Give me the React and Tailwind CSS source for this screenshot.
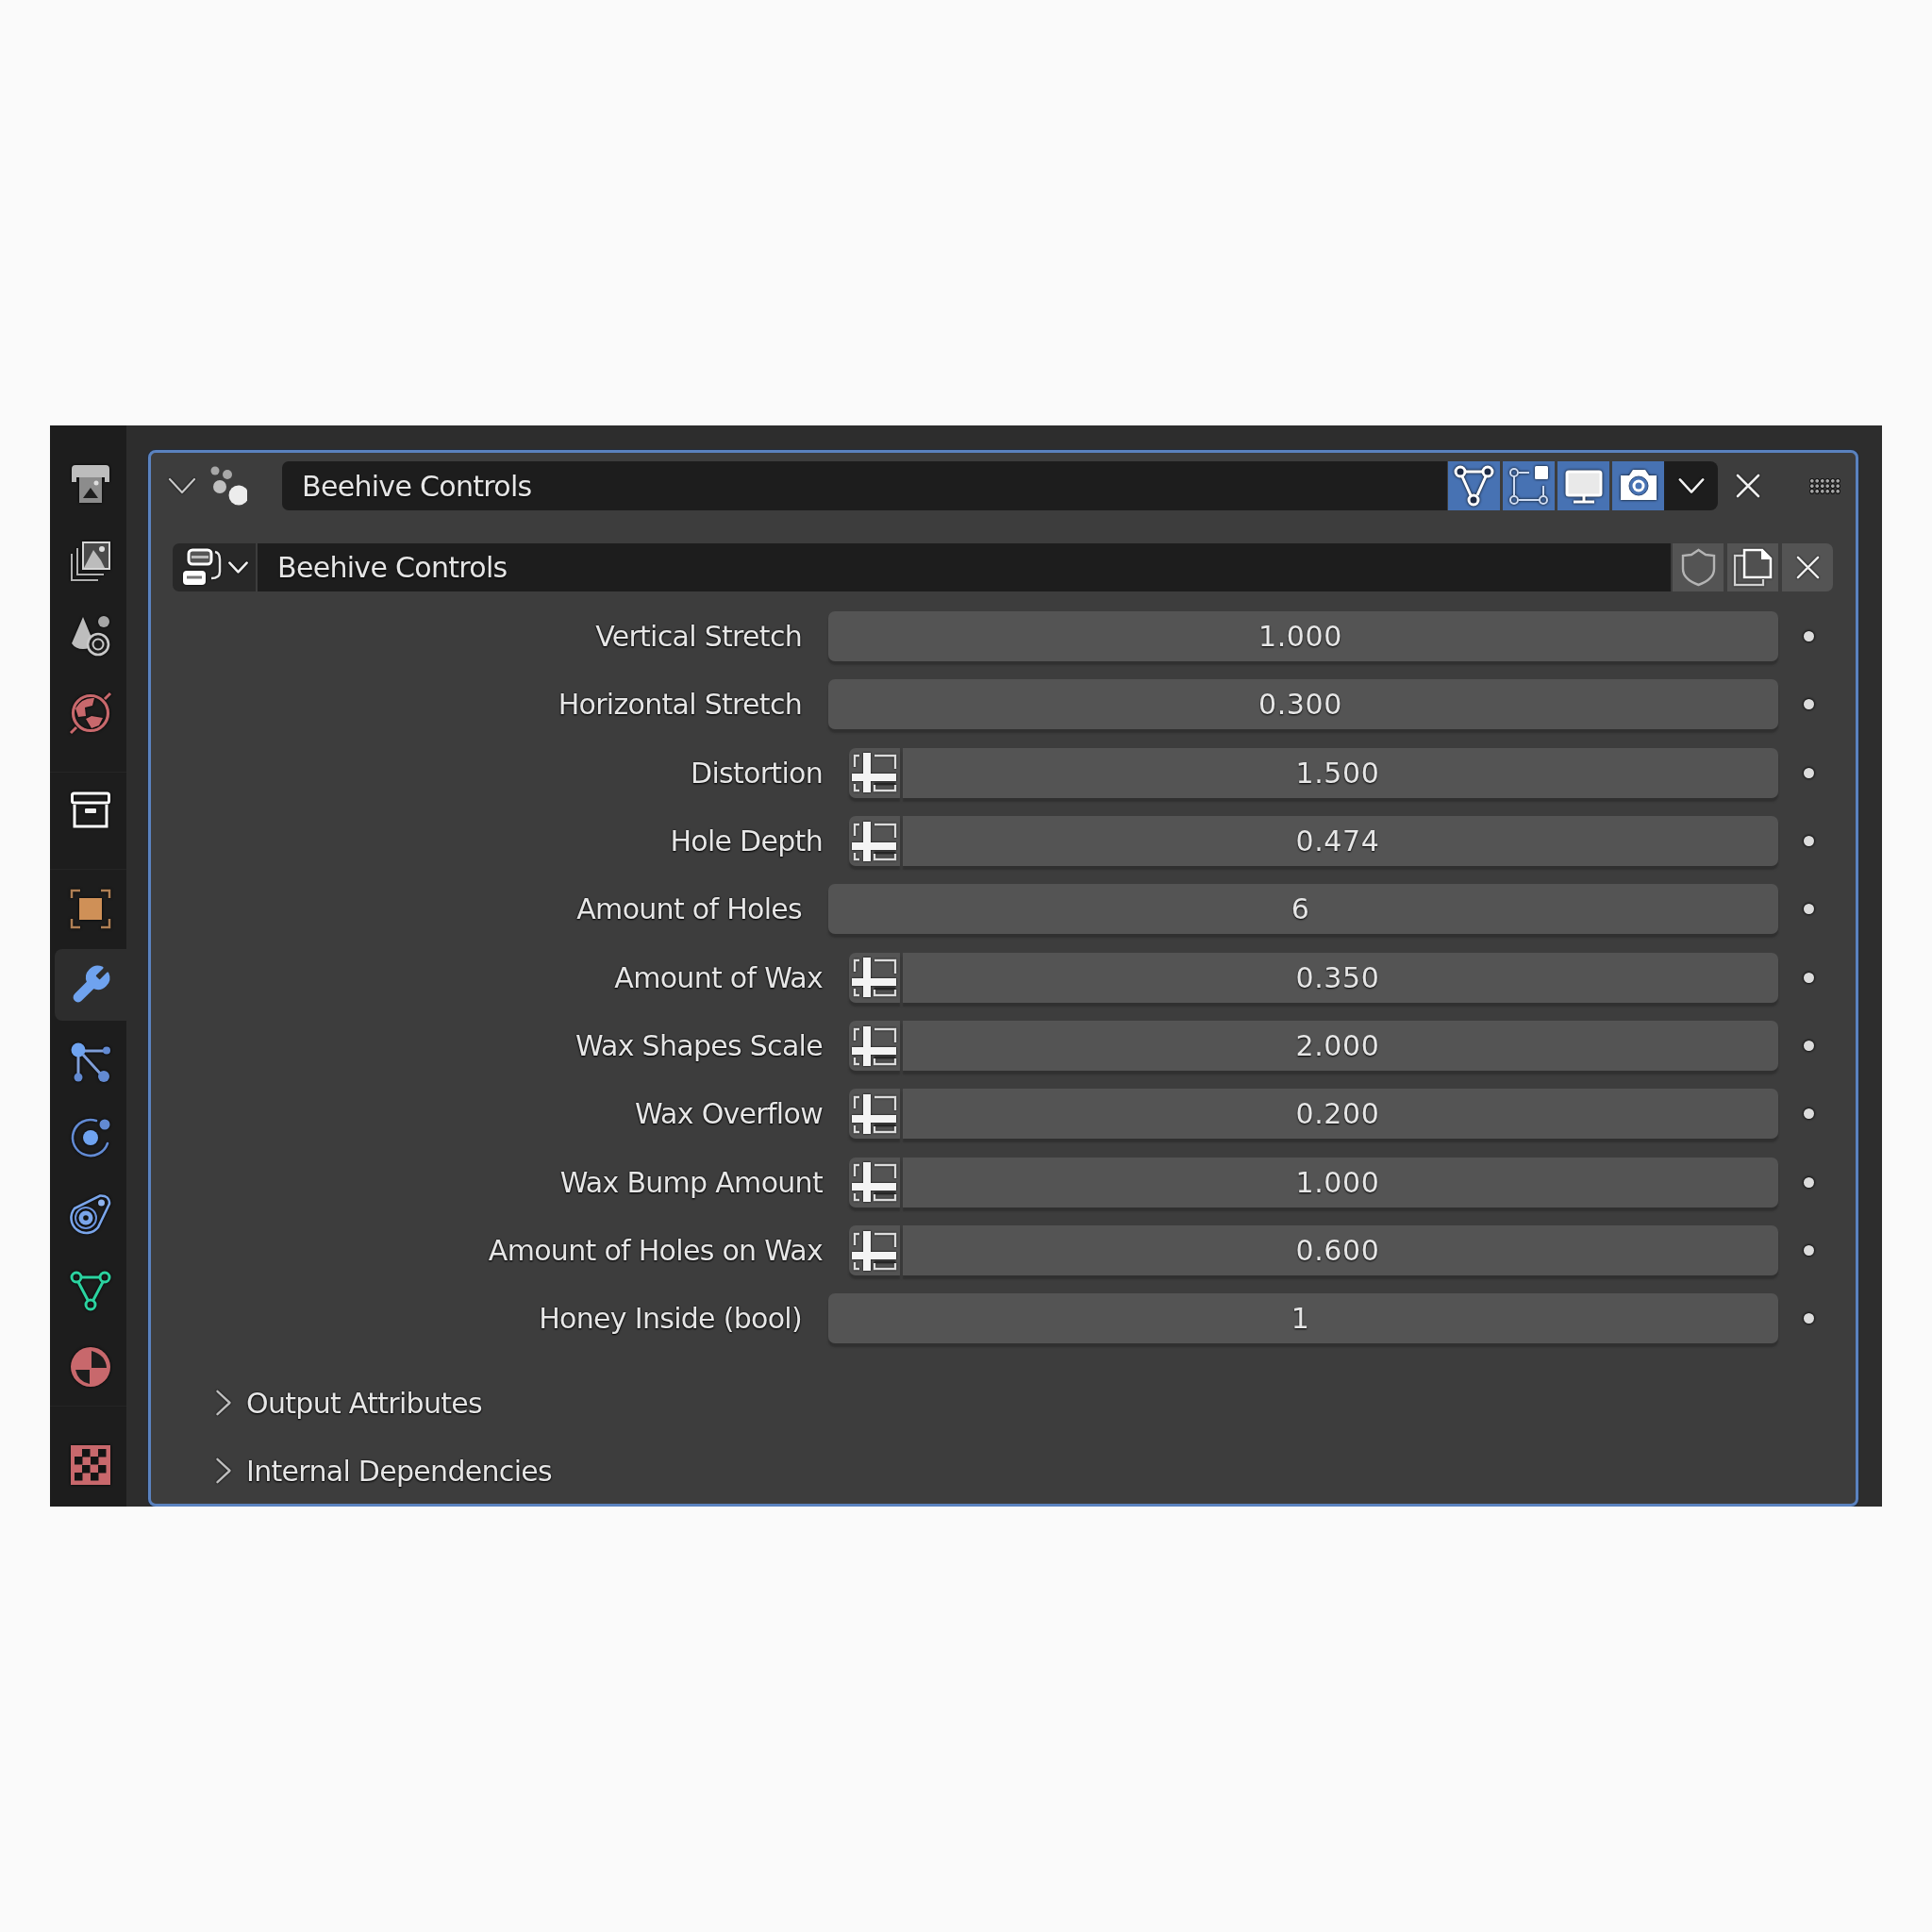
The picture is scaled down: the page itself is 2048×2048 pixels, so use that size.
import React from 'react';

const RED = '#c8686c';
const BLUE = '#628ad2';
const LIGHT = '#6fa3ef';

const rows = [
  { label: 'Vertical Stretch', value: '1.000' },
  { label: 'Horizontal Stretch', value: '0.300' },
  { label: 'Distortion', value: '1.500', toggle: true },
  { label: 'Hole Depth', value: '0.474', toggle: true },
  { label: 'Amount of Holes', value: '6' },
  { label: 'Amount of Wax', value: '0.350', toggle: true },
  { label: 'Wax Shapes Scale', value: '2.000', toggle: true },
  { label: 'Wax Overflow', value: '0.200', toggle: true },
  { label: 'Wax Bump Amount', value: '1.000', toggle: true },
  { label: 'Amount of Holes on Wax', value: '0.600', toggle: true },
  { label: 'Honey Inside (bool)', value: '1' },
];

const Icon = ({ children, w = 42, h = 42, className = '' }) => (
  <svg
    width={w}
    height={h}
    viewBox={`0 0 ${w} ${h}`}
    fill="none"
    className={`shrink-0 overflow-visible drop-shadow-[0_0_1.5px_#000] ${className}`}
  >
    {children}
  </svg>
);

const Chevron = ({ color = '#d8d8d8', size = 30, width = 2.5, dir = 'down' }) => (
  <svg width={size} height={size} viewBox="0 0 30 30" fill="none" className="shrink-0 drop-shadow-[0_0_1px_#000]">
    <path
      d={dir === 'down' ? 'M2 8 L15 22 L28 8' : 'M8 2 L22 15 L8 28'}
      stroke={color}
      strokeWidth={width * (30 / size)}
      strokeLinecap="round"
      strokeLinejoin="round"
    />
  </svg>
);

const Cross = ({ size = 26, color = '#eee' }) => (
  <svg width={size} height={size} viewBox="0 0 26 26" fill="none" className="shrink-0 drop-shadow-[0_0_1px_#000]">
    <path d="M2 2 L24 24 M24 2 L2 24" stroke={color} strokeWidth="2.6" strokeLinecap="round" />
  </svg>
);

const tabIcons = {
  render: (
    <Icon>
      <path d="M1 20 V6 Q1 2 5 2 H37 Q41 2 41 6 V20 H36 V15 H6 V20 Z" fill="#bdbdbd" />
      <rect x="9" y="15" width="24" height="27" fill="#8c8c8c" />
      <path d="M13 37 L21 26 L29 37 Z" fill="#1d1d1d" />
      <circle cx="27" cy="21" r="2.5" fill="#ddd" />
    </Icon>
  ),
  output: (
    <Icon>
      <rect x="13" y="3" width="28" height="28" fill="#4a4a4a" stroke="#d6d6d6" strokeWidth="2" />
      <path d="M14 30 L24 11 L32 22 L36 30 Z" fill="#bcbcbc" />
      <circle cx="33" cy="10" r="3" fill="#ddd" />
      <path d="M7 9 V37 H35 M1 15 V43 H29" stroke="#b0b0b0" strokeWidth="2" />
    </Icon>
  ),
  view: (
    <Icon>
      <path d="M13 1 L25 30 Q20 35 13 35 Q5 35 1 29 Z" fill="#bdbdbd" />
      <circle cx="35" cy="6" r="6" fill="#a6a6a6" />
      <circle cx="29" cy="30" r="11" fill="#1d1d1d" stroke="#c8c8c8" strokeWidth="2.6" />
      <circle cx="29" cy="30" r="5.5" stroke="#c8c8c8" strokeWidth="2" />
    </Icon>
  ),
  world: (
    <Icon>
      <circle cx="21" cy="22" r="18.5" stroke={RED} strokeWidth="3.2" />
      <path d="M5 17 Q12 5 25 6 L23 14 L15 16 L16 25 L8 26 Z M16 28 L22 25 L34 27 L30 35 L22 38 Z" fill={RED} />
      <path d="M0 43 L6 37 M36 7 L42 1" stroke={RED} strokeWidth="3" />
    </Icon>
  ),
  collection: (
    <Icon>
      <rect x="1.5" y="2" width="39" height="10" rx="2" stroke="#fff" strokeWidth="3" />
      <path d="M4 14 V37 H38 V14" stroke="#fff" strokeWidth="3" />
      <rect x="15" y="18" width="12" height="5" rx="1" fill="#eee" />
    </Icon>
  ),
  object: (
    <Icon>
      <rect x="9" y="10" width="24" height="23" fill="#cf9057" />
      <path d="M1 10 V2 H10 M32 2 H41 V10 M41 32 V41 H32 M10 41 H1 V32" stroke="#b08055" strokeWidth="2.5" />
    </Icon>
  ),
  wrench: (
    <svg width="46" height="46" viewBox="0 0 24 24" fill={LIGHT} stroke={LIGHT} strokeWidth="1.2" strokeLinejoin="round" className="shrink-0">
      <path d="M14.7 6.3a1 1 0 0 0 0 1.4l1.6 1.6a1 1 0 0 0 1.4 0l3.77-3.77a6 6 0 0 1-7.94 7.94l-6.91 6.91a2.12 2.12 0 0 1-3-3l6.91-6.91a6 6 0 0 1 7.94-7.94l-3.76 3.76z" />
    </svg>
  ),
  particles: (
    <Icon>
      <path d="M8 10 H36 M8 10 V36 M13 14 L33 36" stroke="#7f9ed8" strokeWidth="3" />
      <circle cx="8" cy="9" r="7.5" fill={LIGHT} />
      <circle cx="38" cy="9.5" r="4" fill={BLUE} />
      <circle cx="8" cy="38" r="4.5" fill={BLUE} />
      <circle cx="35" cy="37" r="6" fill={BLUE} />
    </Icon>
  ),
  physics: (
    <Icon>
      <path d="M27 3 A19 19 0 1 0 39 27" stroke={BLUE} strokeWidth="2.6" strokeLinecap="round" />
      <circle cx="21" cy="21" r="8" fill={LIGHT} />
      <circle cx="36" cy="7" r="5.5" fill={BLUE} />
    </Icon>
  ),
  constraints: (
    <Icon>
      <path d="M4 15 L31 1.5 Q41 1 41 10 L29 35 A16 16 0 1 1 4 15 Z" stroke="#7aa5ea" strokeWidth="2.6" />
      <circle cx="16" cy="25" r="11" stroke="#6b93dc" strokeWidth="2" />
      <circle cx="16" cy="25" r="7.5" fill="#7aa5ea" />
      <circle cx="16" cy="25" r="2.8" fill="#141414" />
      <circle cx="32.5" cy="9" r="3.5" fill="#8fb3ee" />
    </Icon>
  ),
  data: (
    <Icon>
      <path d="M10 7 H32 M8 12 L18 31 M34 12 L24 31" stroke="#2bd3a0" strokeWidth="3" />
      <circle cx="6" cy="7" r="5" stroke="#2bd3a0" strokeWidth="3" />
      <circle cx="36" cy="7" r="5" stroke="#2bd3a0" strokeWidth="3" />
      <circle cx="21" cy="36" r="5" stroke="#2bd3a0" strokeWidth="3" />
    </Icon>
  ),
  material: (
    <Icon>
      <circle cx="21" cy="21" r="21" fill={RED} />
      <path d="M22 4 Q37 8 38 22 L22 22 Z" fill="#1d1d1d" />
      <path d="M5 24 L20 24 L20 39 Q8 37 5 24 Z" fill="#1d1d1d" />
    </Icon>
  ),
  texture: (
    <Icon>
      <rect x="0" y="0" width="42" height="42" fill={RED} />
      {[
        [12, 4], [29, 4],
        [4, 12], [21, 12],
        [12, 21], [29, 21],
        [4, 29], [21, 29],
      ].map(([x, y]) => (
        <rect key={`${x}-${y}`} x={x} y={y} width="8.5" height="8.5" fill="#141414" />
      ))}
    </Icon>
  ),
};

const Tab = ({ name, active }) => (
  <div
    className={
      active
        ? 'h-[76px] my-[2.5px] ml-[5px] -mr-[7px] pr-[7px] bg-[#2d2d2d] rounded-l-[8px] flex items-center justify-center'
        : 'h-[81px] pl-[5px] flex items-center justify-center'
    }
  >
    {tabIcons[name]}
  </div>
);

const ToggleIcon = () => (
  <svg width="48" height="42" viewBox="0 0 48 42" fill="none" className="drop-shadow-[0_0_1px_#000]">
    <path d="M8 3 H3 V15 M24 3 H46 V17 M3 33 V40 H8 M24 34 V40 H46 V34" stroke="#dcdcdc" strokeWidth="2.4" />
    <path d="M24 33 H46" stroke="#222" strokeWidth="1.5" />
    <rect x="12" y="0" width="8" height="42" fill="#f4f4f4" />
    <rect x="0" y="22" width="47" height="8" fill="#f4f4f4" />
  </svg>
);

const Row = ({ label, value, toggle }) => (
  <div className="h-[53px] flex items-center">
    <div
      className={`w-[718px] text-right text-[30px] tracking-[-0.7px] text-[#e6e6e6] [text-shadow:0_1px_2px_#000,0_0_2px_#000] ${
        toggle ? 'pr-[6px]' : 'pr-[28px]'
      }`}
    >
      {label}
    </div>
    <div className={`w-[1007px] h-full flex gap-[3px] ${toggle ? 'pl-[22px]' : ''}`}>
      {toggle && (
        <div className="w-[54px] h-full bg-[#545454] rounded-l-[7px] shadow-[0_4px_2px_#303030] flex items-center justify-center">
          <ToggleIcon />
        </div>
      )}
      <div
        className={`flex-1 h-full bg-[#545454] shadow-[0_4px_2px_#303030] flex items-center justify-center pr-[6px] text-[30px] tracking-[0.6px] text-[#e6e6e6] [text-shadow:0_1px_2px_#000] ${
          toggle ? 'rounded-r-[7px]' : 'rounded-[7px]'
        }`}
      >
        {value}
      </div>
    </div>
    <div className="w-[11px] h-[11px] ml-[27px] rounded-full bg-[#dcdcdc] shadow-[0_0_2px_1px_#111]" />
  </div>
);

const Subpanel = ({ label }) => (
  <div className="h-[72px] flex items-center pl-[63px]">
    <Chevron dir="right" color="#bdbdbd" size={28} width={2.4} />
    <span className="ml-[10px] text-[30px] tracking-[-0.7px] text-[#e6e6e6] [text-shadow:0_1px_2px_#000,0_0_2px_#000]">{label}</span>
  </div>
);

export default function App() {
  return (
    <div className="h-[2048px] bg-[#fafafa] pt-[451px] pl-[53px] font-['DejaVu_Sans',sans-serif]">
      <div className="w-[1942px] h-[1146px] flex overflow-hidden blur-[0.6px]">
        {/* tabs */}
        <div className="w-[81px] shrink-0 bg-[#1d1d1d] pt-[20px] flex flex-col relative z-10">
          <div className="border-b border-[#252525] pb-[23px]">
            <Tab name="render" />
            <Tab name="output" />
            <Tab name="view" />
            <Tab name="world" />
          </div>
          <div className="border-b border-[#252525] pb-[21px]">
            <Tab name="collection" />
          </div>
          <div className="border-b border-[#252525] pb-[1px]">
            <Tab name="object" />
            <Tab name="wrench" active />
            <Tab name="particles" />
            <Tab name="physics" />
            <Tab name="constraints" />
            <Tab name="data" />
            <Tab name="material" />
          </div>
          <div className="pt-[21px]">
            <Tab name="texture" />
          </div>
        </div>

        {/* properties */}
        <div className="flex-1 bg-[#2d2d2d] pt-[26px] pl-[23px] pr-[25px]">
          <div className="h-[1120px] bg-[#3d3d3d] rounded-[8px] border-[3px] border-[#5a82bf] shadow-[0_0_0_1px_#222b3a] overflow-hidden">
            {/* modifier header */}
            <div className="h-[52px] mt-[9px] flex items-center">
              <div className="ml-[18px]">
                <Chevron color="#c8c8c8" size={30} width={2.2} />
              </div>
              <svg width="40" height="44" viewBox="0 0 40 44" className="ml-[14px] shrink-0">
                <circle cx="6" cy="6" r="4.5" fill="#a8a8a8" />
                <circle cx="19" cy="10" r="5" fill="#a8a8a8" />
                <circle cx="11" cy="23" r="7" fill="#c0c0c0" />
                <circle cx="31" cy="32" r="10.5" fill="#ececec" />
              </svg>
              <div className="ml-[37px] w-[1235px] h-full bg-[#1d1d1d] rounded-l-[7px] flex items-center pl-[21px] text-[30px] tracking-[-0.7px] text-[#e6e6e6] [text-shadow:0_1px_2px_#000]">
                Beehive Controls
              </div>
              <div className="h-full flex gap-[3px] shrink-0 ml-[1px]">
                <div className="w-[55px] h-full bg-[#4772b3] flex items-center justify-center">
                  <Icon>
                    <path d="M10 6 H31 M8 11 L17 31 M33 11 L24 31" stroke="#fff" strokeWidth="3" />
                    <circle cx="6" cy="6" r="5" stroke="#fff" strokeWidth="3" fill="#1d2a44" />
                    <circle cx="35" cy="6" r="5" stroke="#fff" strokeWidth="3" fill="#1d2a44" />
                    <circle cx="20" cy="36" r="5" stroke="#fff" strokeWidth="3" fill="#1d2a44" />
                  </Icon>
                </div>
                <div className="w-[55px] h-full bg-[#4772b3] flex items-center justify-center">
                  <Icon>
                    <path d="M10 7 H21 M5 11 V31 M10 36 H32 M36 21 V31" stroke="#cfdcf2" strokeWidth="2" />
                    <circle cx="5" cy="7" r="4" stroke="#cfdcf2" strokeWidth="2" />
                    <circle cx="5" cy="36" r="4" stroke="#cfdcf2" strokeWidth="2" />
                    <circle cx="36" cy="36" r="4" stroke="#cfdcf2" strokeWidth="2" />
                    <rect x="27" y="0" width="14" height="14" rx="1.5" fill="#fff" />
                  </Icon>
                </div>
                <div className="w-[55px] h-full bg-[#4772b3] flex items-center justify-center">
                  <Icon>
                    <rect x="3" y="6" width="36" height="25" rx="2" fill="#e9e9e9" stroke="#fff" strokeWidth="3" />
                    <path d="M21 31 V37 M10 38 H32" stroke="#fff" strokeWidth="3" />
                  </Icon>
                </div>
                <div className="w-[55px] h-full bg-[#4772b3] flex items-center justify-center">
                  <Icon>
                    <path d="M2 10 H11 L15 4 H28 L32 10 H40 V36 H2 Z" fill="#fff" />
                    <circle cx="21" cy="21" r="10" fill="#4772b3" stroke="#2e4c7a" strokeWidth="1" />
                    <circle cx="21" cy="21" r="6.5" fill="#fff" />
                    <circle cx="21" cy="21" r="3.5" fill="#4772b3" />
                  </Icon>
                </div>
              </div>
              <div className="w-[57px] h-full bg-[#1d1d1d] rounded-r-[8px] flex items-center justify-center shrink-0">
                <Chevron color="#f0f0f0" size={28} width={2.6} />
              </div>
              <div className="ml-[19px] shrink-0">
                <Cross />
              </div>
              <div className="ml-[52px] w-[33px] h-[17px] shrink-0 bg-[radial-gradient(circle,#a8a8a8_1.5px,#141414_2px,#141414_2.6px,transparent_3px)] bg-[length:5.5px_5.5px]" />
            </div>

            {/* name row */}
            <div className="h-[51px] mt-[35px] ml-[23px] mr-[24px] flex gap-[2px]">
              <div className="w-[88px] h-full bg-[#282828] rounded-l-[7px] flex items-center pl-[9px]">
                <svg width="44" height="42" viewBox="0 0 44 42" fill="none" className="shrink-0 drop-shadow-[0_0_1px_#000]">
                  <rect x="8" y="2" width="24" height="15" rx="4" fill="#555" stroke="#fff" strokeWidth="3" />
                  <path d="M11 9.5 H29" stroke="#bbb" strokeWidth="3" />
                  <rect x="2" y="24" width="24" height="15" rx="4" fill="#fff" />
                  <path d="M6 31 H22" stroke="#777" strokeWidth="3" />
                  <path d="M36 4 Q41 5 41 12 V25 Q41 32 32 32" stroke="#e6e6e6" strokeWidth="2.5" />
                </svg>
                <div className="ml-[6px]">
                  <Chevron color="#f0f0f0" size={21} width={2.6} />
                </div>
              </div>
              <div className="flex-1 h-full bg-[#1d1d1d] flex items-center pl-[21px] text-[30px] tracking-[-0.7px] text-[#e6e6e6] [text-shadow:0_1px_2px_#000]">
                Beehive Controls
              </div>
              <div className="w-[54px] h-full bg-[#545454] flex items-center justify-center">
                <svg width="37" height="41" viewBox="0 0 37 41" fill="none">
                  <path d="M18.5 2 L26 7 L35 8 V22 Q35 33 18.5 39 Q2 33 2 22 V8 L11 7 Z" stroke="#b4b4b4" strokeWidth="2.4" />
                </svg>
              </div>
              <div className="w-[54px] h-full bg-[#545454] flex items-center justify-center ml-[2px]">
                <svg width="42" height="41" viewBox="0 0 42 41" fill="none" className="drop-shadow-[0_0_1px_#000]">
                  <path d="M11 8 H2 V39 H32 V33" stroke="#d0d0d0" strokeWidth="2.4" />
                  <path d="M12 31 V2 H31 L40 11 V31 Z" fill="#505050" stroke="#fff" strokeWidth="2.6" />
                  <path d="M30 2 V12 H40 Z" fill="#fff" />
                </svg>
              </div>
              <div className="w-[54px] h-full bg-[#545454] rounded-r-[7px] flex items-center justify-center ml-[2px]">
                <Cross size={25} />
              </div>
            </div>

            {/* inputs */}
            <div className="mt-[21px] flex flex-col gap-[19.35px]">
              {rows.map((r) => (
                <Row key={r.label} {...r} />
              ))}
            </div>

            <div className="mt-[27px]">
              <Subpanel label="Output Attributes" />
              <Subpanel label="Internal Dependencies" />
            </div>
          </div>
        </div>
      </div>
    </div>
  );
}
